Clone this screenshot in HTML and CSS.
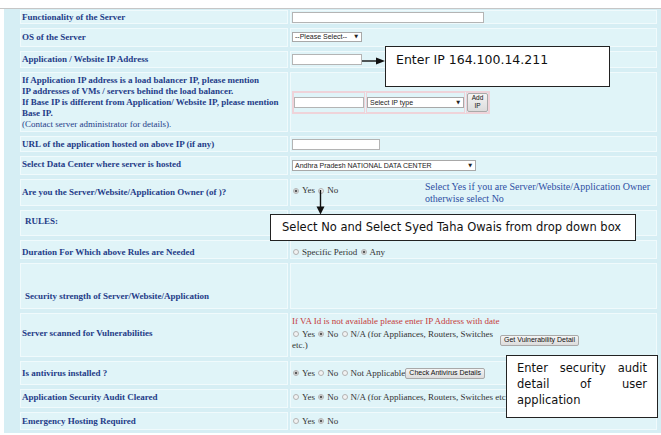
FILE: index.html
```html
<!DOCTYPE html>
<html>
<head>
<meta charset="utf-8">
<link rel="stylesheet" href="styles.css">
</head>
<body>
<div class="page">
  <div class="frame">
    <div class="panel">
      <div class="row r1">
        <div class="lab">Functionality of the Server</div>
        <div class="val"><span class="input w192"></span></div>
      </div>
      <div class="row r2">
        <div class="lab">OS of the Server</div>
        <div class="val"><span class="select w70">--Please Select--<i class="arr">▼</i></span></div>
      </div>
      <div class="row r3">
        <div class="lab">Application / Website IP Address</div>
        <div class="val"><span class="input w70"></span></div>
      </div>
      <div class="row r4">
        <div class="lab">
          <div>If Application IP address is a load balancer IP, please mention<br>IP addresses of VMs / servers behind the load balancer.<br>If Base IP is different from Application/ Website IP, please mention<br>Base IP.<br><span class="note">(Contact server administrator for details).</span></div>
        </div>
        <div class="val">
          <div class="ipgroup">
            <div class="ipcell"><span class="input w70"></span></div>
            <div class="ipcell"><span class="select w97">Select IP type<i class="arr">▼</i></span></div>
            <div class="ipcell"><span class="btn addip">Add<br>IP</span></div>
          </div>
        </div>
      </div>
      <div class="row r5">
        <div class="lab">URL of the application hosted on above IP (if any)</div>
        <div class="val"><span class="input w88"></span></div>
      </div>
      <div class="row r6">
        <div class="lab">Select Data Center where server is hosted</div>
        <div class="val"><span class="select w184">Andhra Pradesh NATIONAL DATA CENTER<i class="arr">▼</i></span></div>
      </div>
      <div class="row r7">
        <div class="lab">Are you the Server/Website/Application Owner (of )?</div>
        <div class="val">
          <span class="opts owner-opts"><span class="rb on"></span>Yes <span class="rb"></span>No</span>
          <span class="help">Select Yes if you are Server/Website/Application Owner<br>otherwise select No</span>
        </div>
      </div>
      <div class="row r8">
        <div class="lab indent">RULES:</div>
        <div class="val"></div>
      </div>
      <div class="row r9">
        <div class="lab">Duration For Which above Rules are Needed</div>
        <div class="val"><span class="opts"><span class="rb"></span>Specific Period <span class="rb on"></span>Any</span></div>
      </div>
      <div class="row r10">
        <div class="lab indent bottom">Security strength of Server/Website/Application</div>
        <div class="val"></div>
      </div>
      <div class="row r11">
        <div class="lab">Server scanned for Vulnerabilities</div>
        <div class="val stack">
          <div class="red">If VA Id is not available please enter IP Address with date</div>
          <div class="vrow">
            <div class="vopts"><span class="rb"></span>Yes <span class="rb on"></span>No <span class="rb"></span>N/A (for Appliances, Routers, Switches<br>etc.)</div>
            <span class="btn">Get Vulnerability Detail</span>
          </div>
        </div>
      </div>
      <div class="row r12">
        <div class="lab">Is antivirus installed ?</div>
        <div class="val"><span class="opts"><span class="rb on"></span>Yes <span class="rb"></span>No <span class="rb"></span>Not Applicable</span><span class="btn">Check Antivirus Details</span></div>
      </div>
      <div class="row r13">
        <div class="lab">Application Security Audit Cleared</div>
        <div class="val"><span class="opts"><span class="rb"></span>Yes <span class="rb on"></span>No <span class="rb"></span>N/A (for Appliances, Routers, Switches etc.)</span></div>
      </div>
      <div class="row r14">
        <div class="lab">Emergency Hosting Required</div>
        <div class="val"><span class="opts"><span class="rb"></span>Yes <span class="rb on"></span>No</span></div>
      </div>
    </div>
  </div>

  <svg class="arrow a1" width="24" height="9" viewBox="0 0 24 9">
    <line x1="0" y1="4" x2="16" y2="4" stroke="#111" stroke-width="1.4"/>
    <polygon points="14,0.5 23,4 14,7.5" fill="#111"/>
  </svg>
  <div class="callout c1">Enter IP 164.100.14.211</div>

  <svg class="arrow a2" width="9" height="25" viewBox="0 0 9 25">
    <line x1="4.5" y1="0" x2="4.5" y2="18" stroke="#111" stroke-width="1.4"/>
    <polygon points="0.5,16.5 8.5,16.5 4.5,24.5" fill="#111"/>
  </svg>
  <div class="callout c2">Select No and Select Syed Taha Owais from drop down box</div>

  <div class="callout c3">Enter security audit detail of user application</div>
</div>
</body>
</html>
```

FILE: styles.css
```css
body {
  margin: 0;
  background: #ffffff;
  font-family: "Liberation Serif", "Times New Roman", serif;
}

.page {
  position: relative;
  width: 661px;
  height: 435px;
  overflow: hidden;
  padding-top: 8px;
  box-sizing: border-box;
}

.frame {
  border-top: 1px solid #c6c6c6;
}

.panel {
  margin-left: 4px;
  background: #d6eef4;
  padding: 1px 4px 3px 16px;
}

.row {
  display: grid;
  grid-template-columns: 268px 367px;
  column-gap: 2px;
  margin-top: 4px;
}

.panel > .row:first-child {
  margin-top: 0;
}

.r1 { height: 14px; }
.r2 { height: 19px; }
.r3 { height: 17px; }
.r4 { height: 60px; }
.r5 { height: 16px; }
.r6 { height: 19px; }
.r7 { height: 27px; }
.r8 { height: 26px; }
.r9 { height: 19px; }
.r10 { height: 46px; }
.r11 { height: 44px; }
.r12 { height: 24px; }
.r13 { height: 19px; }
.r14 { height: 18px; }

.lab,
.val {
  background: #e0f4f8;
  border: 1px solid #f0fafc;
  display: flex;
  align-items: center;
  padding: 0 1px;
  min-width: 0;
  white-space: nowrap;
}

.lab {
  font-weight: bold;
  font-size: 9px;
  line-height: 11px;
  color: #1f3c88;
}

.lab .note {
  font-weight: normal;
}

.lab.indent {
  padding-left: 4px;
}

.r8 .lab {
  padding-bottom: 3px;
}

.r9 .lab,
.r9 .val {
  padding-top: 5px;
}

.r11 .lab,
.r13 .lab,
.r13 .val {
  padding-bottom: 3px;
}

.r6 .lab {
  padding-bottom: 2px;
}

.lab.bottom {
  align-items: flex-end;
  padding-bottom: 6px;
}

.val {
  font-size: 9px;
  line-height: 11px;
  color: #333333;
}

.input {
  display: block;
  height: 11px;
  background: #ffffff;
  border: 1px solid #b4b4b4;
  box-sizing: border-box;
}

.w192 { width: 192px; }
.w70 { width: 70px; }
.w88 { width: 88px; }
.w97 { width: 97px; }
.w184 { width: 184px; }

.select {
  display: flex;
  align-items: center;
  justify-content: space-between;
  height: 11px;
  padding: 0 3px 0 2px;
  background: #ffffff;
  border: 1px solid #a8a8a8;
  box-sizing: border-box;
  font-family: "Liberation Sans", Arial, sans-serif;
  font-size: 7px;
  line-height: 9px;
  color: #222222;
}

.r2 .select {
  height: 10px;
  margin-top: -2px;
}

.arr {
  font-style: normal;
  font-family: "DejaVu Sans", sans-serif;
  font-size: 5px;
  color: #222222;
}

.ipgroup {
  display: flex;
  gap: 1px;
  border: 1px solid #efd3d9;
}

.ipcell {
  display: flex;
  align-items: center;
  border: 1px solid #efd3d9;
}

.btn {
  display: inline-flex;
  align-items: center;
  justify-content: center;
  height: 11px;
  padding: 0 3px;
  border: 1px solid #a9a9a9;
  border-radius: 2px;
  background: linear-gradient(#f4f4f4, #dcdcdc);
  box-sizing: border-box;
  font-family: "Liberation Sans", Arial, sans-serif;
  font-size: 7px;
  line-height: 8px;
  color: #111111;
  white-space: nowrap;
}

.btn.addip {
  width: 21px;
  height: 19px;
  padding: 0;
  text-align: center;
  font-size: 6.5px;
}

.rb {
  display: inline-block;
  width: 6px;
  height: 6px;
  box-sizing: border-box;
  border-radius: 50%;
  border: 1px solid #b3b3b3;
  background: #f2f2f2;
  margin: 0 3px 0 1px;
  vertical-align: -0.5px;
}

.rb.on {
  background: radial-gradient(circle, #5a5a5a 0 1.2px, #efefef 1.7px);
}

.owner-opts {
  width: 133px;
  margin-top: -4px;
}

.help {
  font-size: 10px;
  line-height: 12px;
  color: #2e4fa3;
}

.stack {
  flex-direction: column;
  align-items: flex-start;
  justify-content: center;
  padding-bottom: 2px;
}

.red {
  color: #c43a3a;
  line-height: 11px;
  margin-bottom: 1.5px;
}

.vrow {
  display: flex;
  align-items: center;
}

.vopts {
  width: 208px;
  line-height: 11.5px;
}

.arrow {
  position: absolute;
}

.a1 {
  left: 362px;
  top: 57px;
}

.a2 {
  left: 316px;
  top: 190px;
}

.callout {
  position: absolute;
  background: #ffffff;
  border: 1px solid #222222;
  box-sizing: border-box;
  font-family: "DejaVu Sans", Verdana, sans-serif;
  color: #111111;
}

.c1 {
  left: 385px;
  top: 46px;
  width: 225px;
  height: 41px;
  padding: 5px 10px;
  font-size: 12.5px;
  line-height: 15px;
}

.c2 {
  left: 270px;
  top: 214px;
  width: 366px;
  height: 27px;
  padding: 0 11px;
  font-size: 11.5px;
  line-height: 25px;
  white-space: nowrap;
}

.c3 {
  left: 506px;
  top: 355px;
  width: 152px;
  height: 63px;
  padding: 4px 10px;
  font-size: 11.5px;
  line-height: 16px;
  text-align: justify;
}
```
